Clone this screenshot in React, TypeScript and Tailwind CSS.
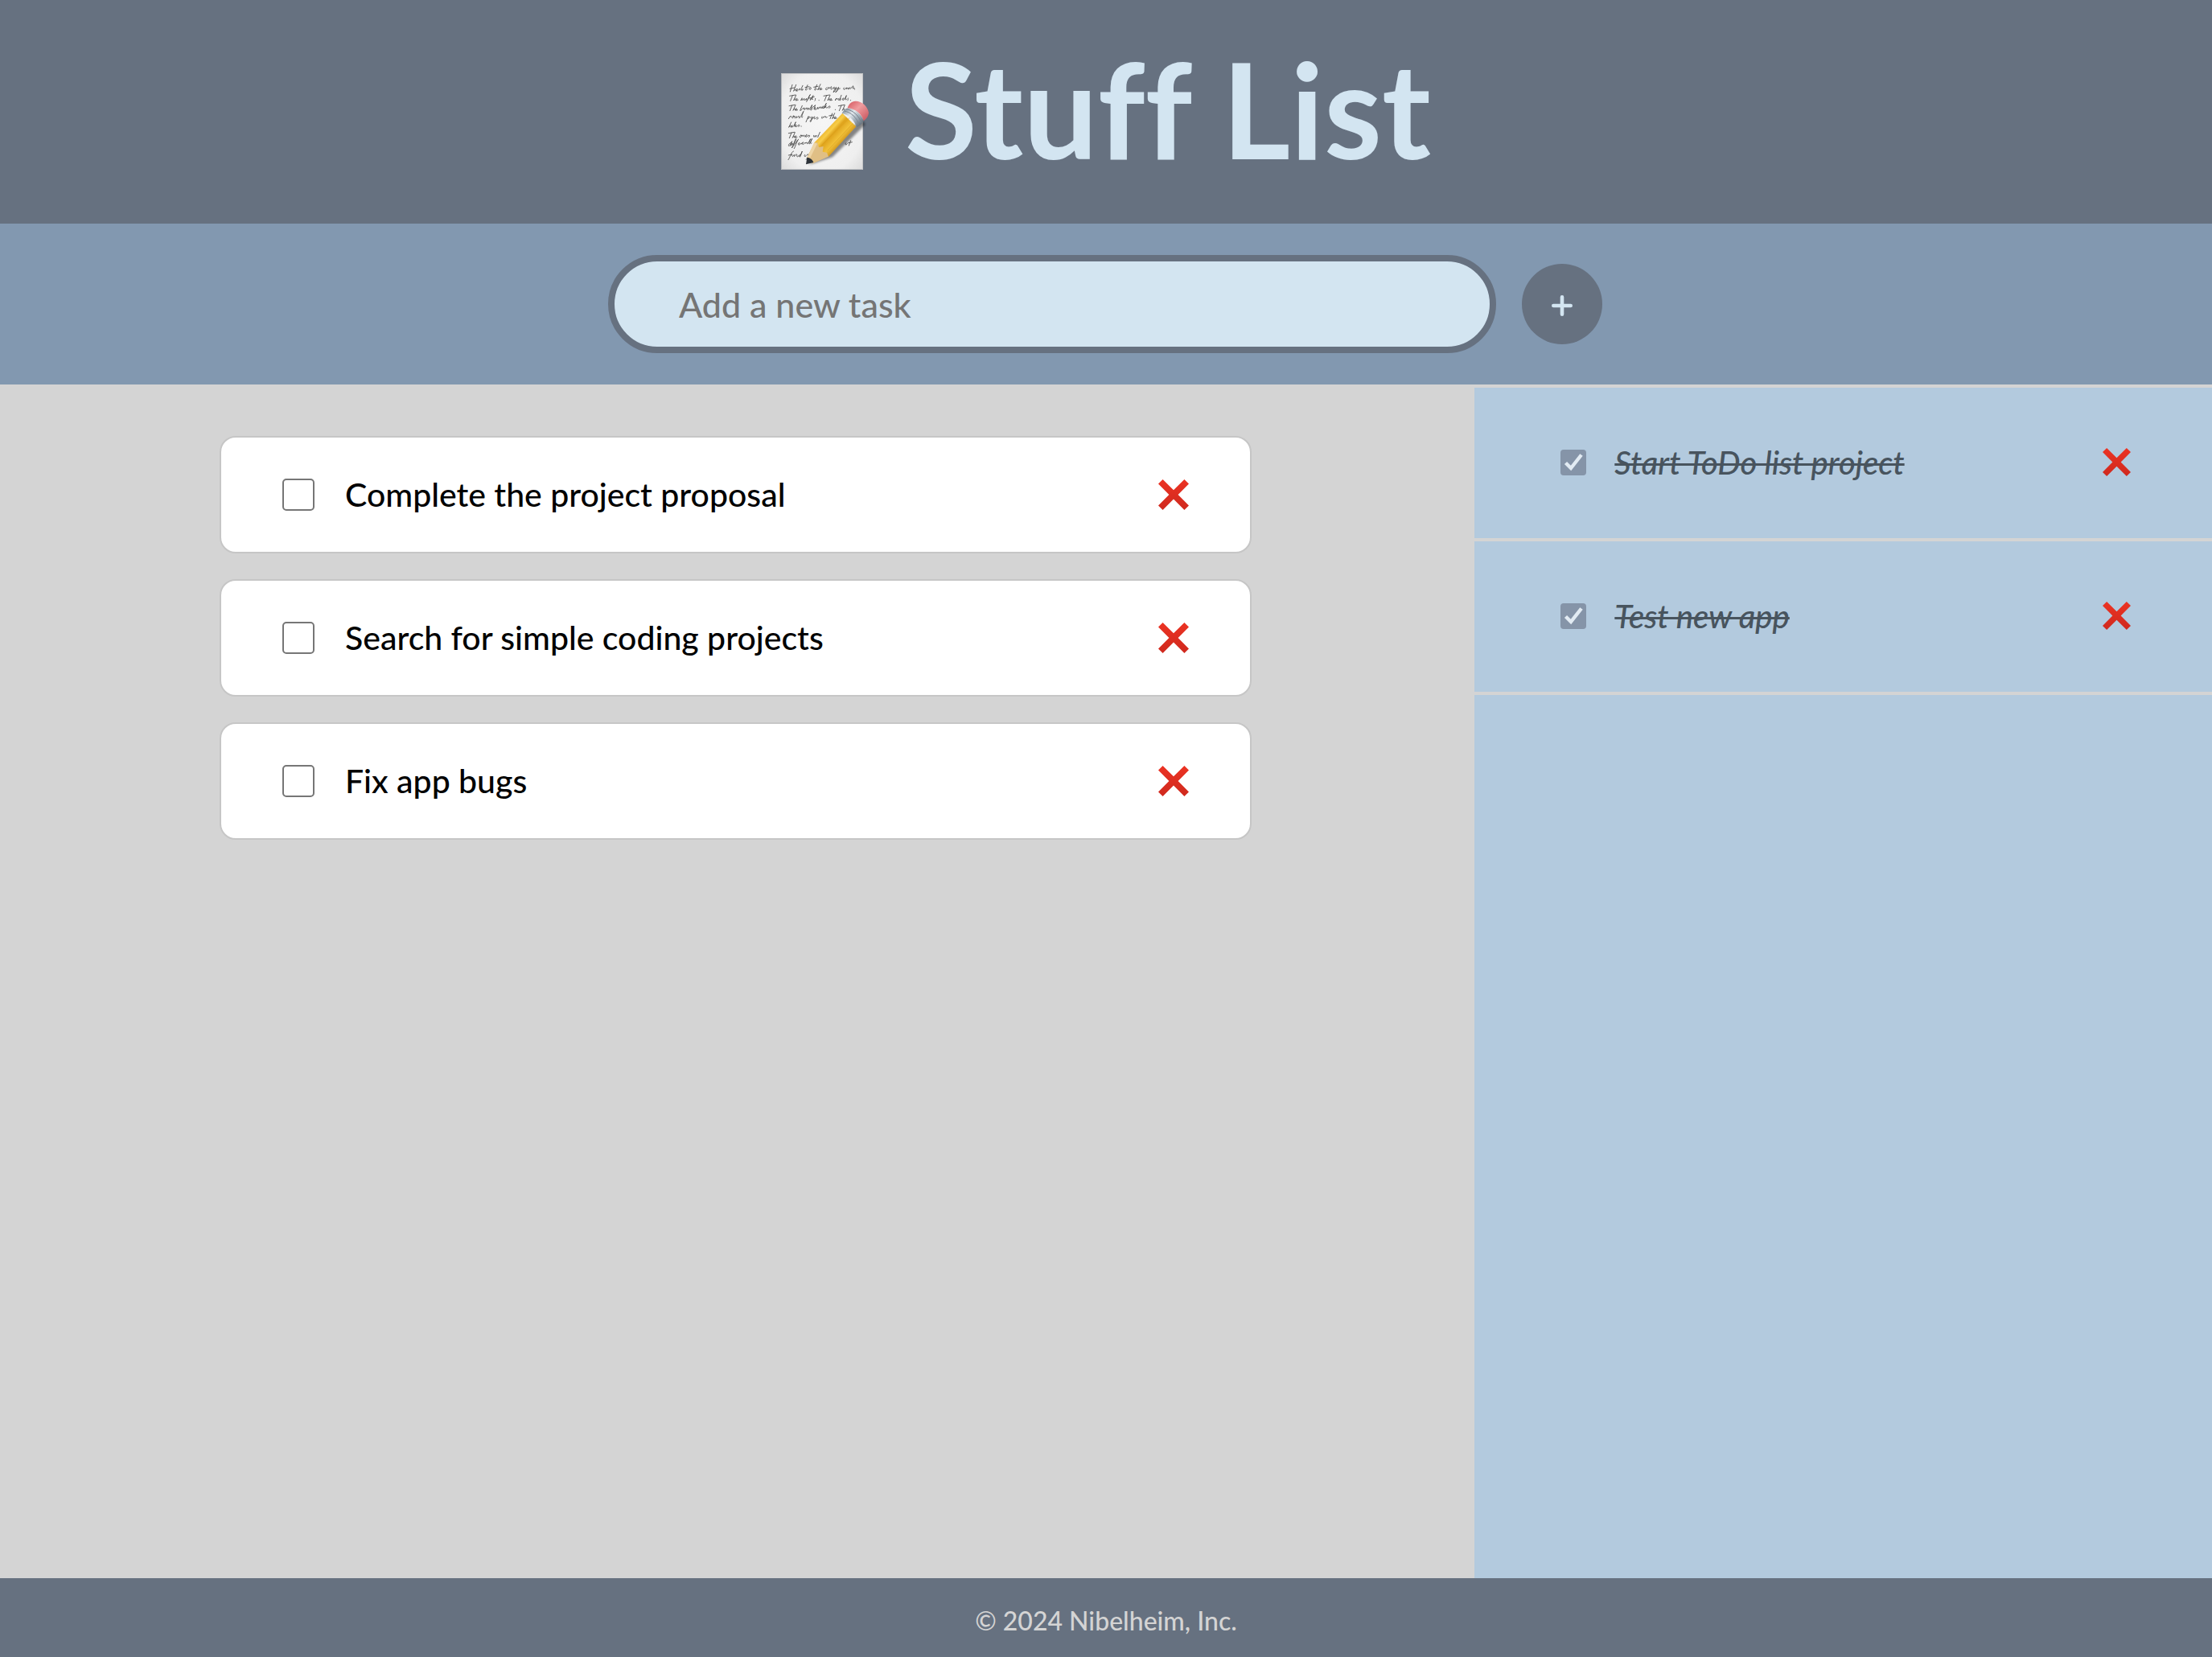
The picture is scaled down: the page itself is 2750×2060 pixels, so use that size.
import { useId, useState } from "react";

type Task = { id: number; label: string };

const openTasks: Task[] = [
  { id: 1, label: "Complete the project proposal" },
  { id: 2, label: "Search for simple coding projects" },
  { id: 3, label: "Fix app bugs" },
];

const doneTasks: Task[] = [
  { id: 4, label: "Start ToDo list project" },
  { id: 5, label: "Test new app" },
];

function MemoIcon() {
  return (
    <svg viewBox="56 90 330 360" className="mt-6 h-[120px] w-[110px] shrink-0" aria-hidden="true">
      <defs>
        <radialGradient id="paper" cx="0.5" cy="0.5" r="0.75">
          <stop offset="0" stopColor="#f6f6f6" />
          <stop offset="0.7" stopColor="#efefef" />
          <stop offset="1" stopColor="#d6d6d6" />
        </radialGradient>
        <linearGradient id="wood" gradientUnits="userSpaceOnUse" x1="222" y1="290" x2="290" y2="352">
          <stop offset="0" stopColor="#e9b02a" />
          <stop offset="0.25" stopColor="#f7cc48" />
          <stop offset="0.4" stopColor="#dfa31c" />
          <stop offset="0.7" stopColor="#f2c23a" />
          <stop offset="1" stopColor="#c98a12" />
        </linearGradient>
        <linearGradient id="metal" gradientUnits="userSpaceOnUse" x1="296" y1="225" x2="350" y2="280">
          <stop offset="0" stopColor="#8f9ba6" />
          <stop offset="0.35" stopColor="#e4eaef" />
          <stop offset="0.65" stopColor="#a8b4be" />
          <stop offset="1" stopColor="#6e7983" />
        </linearGradient>
        <linearGradient id="rubber" gradientUnits="userSpaceOnUse" x1="318" y1="200" x2="372" y2="258">
          <stop offset="0" stopColor="#dc6a70" />
          <stop offset="0.4" stopColor="#f09c9f" />
          <stop offset="1" stopColor="#cf6269" />
        </linearGradient>
        <filter id="soft" x="-20%" y="-20%" width="140%" height="140%">
          <feGaussianBlur stdDeviation="5" />
        </filter>
      </defs>
      <rect x="58" y="91" width="303" height="358" fill="url(#paper)" stroke="#c9c9c9" strokeWidth="2" />
      <g fill="none" stroke="#4a4a4a" strokeWidth="2.6" strokeLinecap="round" strokeLinejoin="round">
        <path d="M98 133l-8 26M89 148l17-4M112 133l-9 24c5-8 11-8 8-1 6-2 9-8 4-8-5 4-3 10 2 8 5-3 7-8 9-9-3 10 3 5 6 0l5-11M132 152l5-3c3 0 0 5-3 5M155 134l-8 18c2 3 6-1 8-4M146 143l15-3M163 144c-6 7 2 10 5 3 0-5-3-5-5-3M190 133l-9 19c2 3 6-1 8-4M178 142l16-3M203 131l-10 22c5-9 9-9 7-2 4 4 9-5 5-7-5 4-2 10 4 6M228 143c-7 2-8 12 0 8l7-9c-2 8 2 4 6 1 1-4 6-3 3 0-6 7 1 10 5 3l6-4c-1 6-4 8 1 7l6-7c-3 12-7 18-11 19 3-10 9-13 14-13l6-6c-3 12-8 20-12 19 4-10 12-13 17-14M291 144c-6 7 2 10 5 3l5-3c-2 8 0 6 4 0 3-1 0 8 3 6l5-7c-3 7 5 6 7-1 5-6 8-5 5-1l-1 6 6-1M330 150h1" />
        <path d="M88 175l22-4M99 173l-8 20M112 172l-9 20c5-9 9-9 7-1 4 3 9-6 5-7-6 5-2 10 5 6M134 183l-4 9c4-8 8-9 7-1 4-8 8-9 6-1 5 2 6-4 8-6-3 9 2 7 5 3 6-13 12-19 8-17-4 4-9 24-13 27M160 183l8-1-4 8c4 2 8-14 12-17-5 12-7 18-1 14M170 181l10-3M184 184c-3 5 3 5-2 9M197 191h1M215 175l22-4M226 173l-8 20M239 172l-9 20c5-9 9-9 7-1 4 3 9-6 5-7-6 5-2 10 5 6M262 184l-4 8c3-7 6-9 9-6M270 184c-5 7 2 9 4 2M281 172l-7 19c5 2 8-6 4-7M287 188c6-5 2-8-1-3-2 7 3 7 7 2l7-14c-4 12-6 19 0 15M306 183c-3 5 3 5-2 9M315 191h1" />
        <path d="M86 212l22-4M97 210l-8 20M110 209l-9 20c5-9 9-9 7-1 4 3 9-6 5-7-6 5-2 10 5 6M135 211l-8 18c4 2 8-6 10-8l7-1c-6 7 0 10 3 2l6-3c-3 10 2 8 6 0-3 10 3 8 6 1l7-12-6 19c5 2 8-5 5-7l13-11c-4 10-8 19-2 15 5-8 2-8 0-3-1 6 4 6 8 2l3-6c-1 8 2 9 3 3 4-6 6-6 5 1 4-7 7-8 6 0l6-4c5-4 0-6-3-1 0 7 4 5 7 1l8-15-9 19 9-9c-6 5-2 9 5 6l7-6c3 2 3 8-2 8M258 226h1M270 212l22-4M281 210l-8 20M294 209l-9 20c5-9 9-9 7-1" />
        <path d="M84 260l6-9c4-2 5 0 3 2M101 250c-8 5-3 11 2 4 2-6-3-5-2-4l7 1c-3 9 2 8 6 0-2 9 1 6 5 1 4-4 6-2 4 5 6 1 13-20 17-25-8 20-9 28-3 21M158 251l-9 21M156 256c8-9 11 0 0 4M169 252c-7 6 2 11 5 1l-7 18c-6 1-1-8 7-12 6-9 10-7 8-5-6 5-2 9 4 4l6-4c3 2 3 8-2 8M209 252c-2 6-2 8 2 5l5-5c-3 10 5-7 6 0 1 6 3 5 6 1M247 240l-8 20M235 249l15-3M256 239l-9 21c5-9 9-9 7-1 4 3 9-6 5-7-6 5-2 10 5 6" />
        <path d="M94 273l-9 19c5-9 9-9 7-1 4 3 8-6 5-7-5 6 2 10 7 2l7-14c-5 11-7 20-2 16 7-7 2-8 0-3-1 7 5 5 9 1l5-4c3 3 2 8-2 7M131 288h1" />
        <path d="M84 314l22-4M95 312l-8 20M108 311l-9 20c5-9 9-9 7-1 4 3 9-6 5-7-6 5-2 10 5 6M129 322c-8 6-2 11 3 4 2-5-2-5-3-4l8 0c-2 11 5-6 6 0-1 7 4 6 8 1 4-6-1-5-3-1-2 7 4 7 7 2l6-3c4 2 1 8-2 7M178 322c-1 8 1 9 6 0-1 9 3 7 6 0M201 310l-8 19" />
        <path d="M92 350c-11 2-9 18-3 9l8-15c-6 17-7 20-3 15l5-8c-2 9 1 8 5 2 9-16 11-21 6-17-4 8-9 26-14 33l18-24c7-11 9-9 5-6-5 8-10 26-14 32M123 354c5-5 1-7-2-2-2 9 4 6 8 1l3-2c-2 8 5-4 6-1 4-3 0-4-3 0-1 8 5 6 9 1l3-3c-1 9 4-2 6 0 0 9 3 5 6 0l7-13c-6 14-8 20-3 18l9-19c-7 14-9 21-2 17M298 350c-6 7 2 10 5 3M316 341l-7 19M307 350l14-3" />
        <path d="M102 381c-6 0-12 22-19 32M84 396l12-3M97 394c-1 9 3 8 8 0-1 8 1 8 4 3 3-7 7-6 6 0 0 7 3 5 7 1M128 393c-11 5-4 12 1 3l6-15-8 21M145 394c-6 7 2 10 5 3M168 382c-6 2-13 24-18 30M153 394l10-2" />
      </g>
      <path d="M158 432l90-29 122-122-14-20-130 120z" fill="#000" opacity="0.45" filter="url(#soft)" />
      <path d="M180 349L285 239l51 50-103 112-27-3-22-27z" fill="url(#wood)" />
      <path d="M208 358l104-102M229 379l95-102" stroke="#d79a1a" strokeWidth="3" opacity="0.55" fill="none" />
      <path d="M180 349l-27 56 21 22 59-26-6-15-16-3 3-20-17 3-5-17z" fill="#e0bf85" />
      <path d="M180 349l-27 56 8 8 30-60z" fill="#eed5a6" />
      <path d="M153 404l-4 26 28-7c-3-10-13-19-24-19z" fill="#2d3238" />
      <path d="M283 239c6-11 14-17 22-19 29 3 53 25 59 49-4 9-13 18-26 22-8-25-29-46-55-52z" fill="url(#metal)" />
      <path d="M291 231c28 5 48 26 56 53M299 224c28 5 48 26 57 52" fill="none" stroke="#7a8690" strokeWidth="3" />
      <path d="M304 220c4-15 15-25 30-26 24 0 46 20 49 44-1 12-7 22-19 30-6-24-30-46-60-48z" fill="url(#rubber)" />
    </svg>
  );
}

function CrossIcon({ className }: { className: string }) {
  const id = useId();
  return (
    <svg viewBox="0 0 38 38" className={className} aria-hidden="true">
      <defs>
        <linearGradient id={id} x1="0" y1="0" x2="0" y2="1">
          <stop offset="0" stopColor="#ec3323" />
          <stop offset="1" stopColor="#cf291e" />
        </linearGradient>
      </defs>
      <path
        d="M0 5.4L5.6 0 19 13.3 32.4 0 38 5.4 24.6 18.9 38 32.6 32.4 38 19 24.6 5.6 38 0 32.6 13.4 18.9z"
        fill={`url(#${id})`}
      />
    </svg>
  );
}

export default function App() {
  const [draft, setDraft] = useState("");

  return (
    <div className="flex min-h-screen flex-col bg-[#d4d4d4] font-['Lato',sans-serif] font-medium">
      <header className="flex h-[278px] items-center justify-center gap-11 bg-[#667180]">
        <MemoIcon />
        <h1 className="mb-2 text-[164px] leading-[190px] font-bold text-[#d3e5f1] [font-variant-ligatures:none]">
          Stuff List
        </h1>
      </header>

      <form
        className="flex h-[200px] items-center justify-center gap-8 bg-[#8298b0] pr-0.5"
        onSubmit={(e) => e.preventDefault()}
      >
        <input
          type="text"
          aria-label="Add a new task"
          placeholder="Add a new task"
          value={draft}
          onChange={(e) => setDraft(e.target.value)}
          className="h-[122px] w-[1104px] max-w-[70%] rounded-full border-8 border-[#667180] bg-[#d3e5f1] px-20 text-[43px] text-black outline-none placeholder:text-[#757575]"
        />
        <button
          type="submit"
          aria-label="Add task"
          className="flex size-[100px] items-center justify-center rounded-full bg-[#667180] pt-1 text-[#d3e5f1]"
        >
          <svg viewBox="0 0 26 26" className="size-[26px]" aria-hidden="true">
            <path d="M13 2.3v21.4M2.3 13h21.4" stroke="currentColor" strokeWidth="4.6" strokeLinecap="round" />
          </svg>
        </button>
      </form>

      <main className="flex grow">
        <ul className="flex w-2/3 flex-col items-center gap-8 pt-16">
          {openTasks.map((task) => (
            <li
              key={task.id}
              className="mr-1 flex h-[146px] w-[70%] items-center justify-between rounded-[20px] border-2 border-[#c6c6c6] bg-white px-[76px]"
            >
              <label className="flex items-center gap-[38px] text-[41px] leading-[50px] text-black">
                <input
                  type="checkbox"
                  className="size-10 shrink-0 appearance-none rounded-[5px] border-2 border-[#767676] bg-white"
                />
                {task.label}
              </label>
              <button type="button" aria-label={`Delete ${task.label}`}>
                <CrossIcon className="size-[38px]" />
              </button>
            </li>
          ))}
        </ul>

        <ul className="w-1/3 border-t-4 border-[#d4d4d4] bg-[#b3cade]">
          {doneTasks.map((task) => (
            <li
              key={task.id}
              className="flex h-[191px] items-center justify-between border-b-4 border-[#d4d4d4] pr-[101px] pb-0.5 pl-[107px]"
            >
              <label className="flex items-center gap-[35px] text-[40px] leading-[46px] text-[#48545e] italic">
                <span className="grid size-8 shrink-0">
                  <input
                    type="checkbox"
                    defaultChecked
                    className="peer col-start-1 row-start-1 size-8 appearance-none rounded-[4px] bg-[#8594a8]"
                  />
                  <svg
                    viewBox="0 0 32 32"
                    className="pointer-events-none invisible col-start-1 row-start-1 size-8 peer-checked:visible"
                    aria-hidden="true"
                  >
                    <path d="M6.5 16.5l6.5 6.5L26 6.5" fill="none" stroke="#e2ebf3" strokeWidth="4.4" />
                  </svg>
                </span>
                <span className="line-through decoration-3">{task.label}</span>
              </label>
              <button type="button" aria-label={`Delete ${task.label}`}>
                <CrossIcon className="size-[35px]" />
              </button>
            </li>
          ))}
        </ul>
      </main>

      <footer className="flex h-[98px] items-center justify-center bg-[#667180] pt-2 text-[32px] leading-[40px] text-[#d4d4d4]">
        <p>© 2024 Nibelheim, Inc.</p>
      </footer>
    </div>
  );
}
